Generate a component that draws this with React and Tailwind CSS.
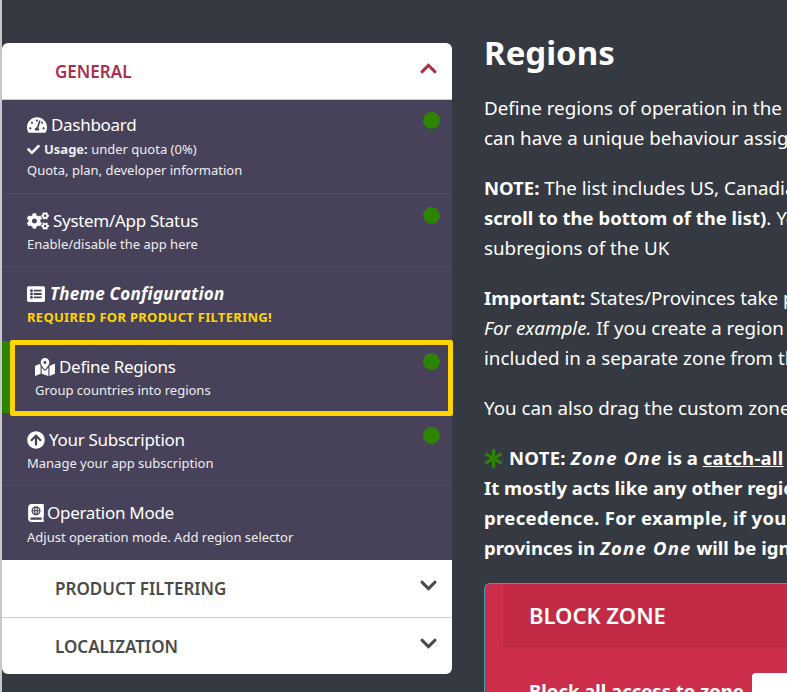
import React from 'react';
import { FaTachometerAlt, FaCheck, FaCogs, FaListAlt, FaMapMarkedAlt, FaArrowCircleUp, FaAtlas, FaChevronUp, FaChevronDown, FaAsterisk } from 'react-icons/fa';

const Dot = ({ className = '' }) => <span className={`w-[17px] h-[17px] rounded-full bg-[#2c8400] shrink-0 ${className}`} />;

function MenuRow({ icon, title, dot, children, className = '' }) {
  return (
    <div className={`flex justify-between pl-[25px] pr-[12px] border-b border-[#514c64] ${className}`}>
      <div>
        <div className="flex items-center gap-[4px] text-[17px] leading-[24px] text-white tracking-[-0.3px]">
          {icon}
          <span>{title}</span>
        </div>
        {children}
      </div>
      {dot}
    </div>
  );
}

function SectionHeader({ title, open, last }) {
  return (
    <div className={`flex justify-between pl-[53px] pr-[14px] pt-[17px] bg-white ${last ? 'h-[56px] rounded-b-[6px]' : 'border-b border-[#cccccc]'} ${!last && !open ? 'h-[58px]' : ''} ${open ? 'h-[57px] rounded-t-[6px] text-[#ab2f4c]' : 'text-[#4a4a4a]'}`}>
      <span className="text-[17px] leading-[24px] font-semibold">{title}</span>
      {open ? <FaChevronUp size={19} className="mt-[-1px]" /> : <FaChevronDown size={19} className="mt-[-1px]" />}
    </div>
  );
}

export default function App() {
  return (
    <div className="flex w-full h-[692px] overflow-hidden bg-[#353a42]" style={{ fontFamily: '"Noto Sans", sans-serif' }}>
      <div className="w-[2px] shrink-0 bg-[#c8c8c8]" />

      {/* Sidebar */}
      <div className="w-[450px] shrink-0 mt-[43px] h-[631px]">
        <SectionHeader title="GENERAL" open />
        <div className="bg-[#47425a] text-[13px] leading-[22px] text-[#eeeeee]">
          <MenuRow icon={<FaTachometerAlt size={20} />} title="Dashboard" dot={<Dot className="mt-[-1px]" />} className="h-[94px] pt-[13px]">
            <div className="flex items-center gap-[4px] mt-[1px]">
              <FaCheck size={13} />
              <span><b>Usage:</b> under quota (0%)</span>
            </div>
            <div className="mt-[-1px]">Quota, plan, developer information</div>
          </MenuRow>
          <MenuRow icon={<FaCogs size={22} />} title="System/App Status" dot={<Dot className="mt-[-2px]" />} className="h-[73px] pt-[15px]">
            <div>Enable/disable the app here</div>
          </MenuRow>
          <div className="h-[73px] pt-[15px] pl-[25px]">
            <div className="flex items-center gap-[5px] text-[17px] leading-[24px] text-white font-bold italic tracking-[0.25px]">
              <FaListAlt size={18} />
              <span>Theme Configuration</span>
            </div>
            <div className="text-[#ffd500] font-bold tracking-[0.3px]">REQUIRED FOR PRODUCT FILTERING!</div>
          </div>
          <div className="w-[451px] h-[76px] flex">
            <div className="w-[8px] h-[72px] bg-[#2c8400] mt-[1px]" />
            <div className="flex-1 flex justify-between border-[5px] border-[#ffd500] rounded-[2px] pl-[20px] pr-[8px] pt-[10px]">
              <div>
                <div className="flex items-center gap-[4px] text-[17px] leading-[24px] text-white tracking-[-0.3px]">
                  <FaMapMarkedAlt size={20} />
                  <span>Define Regions</span>
                </div>
                <div>Group countries into regions</div>
              </div>
              <Dot className="mt-[-2px]" />
            </div>
          </div>
          <MenuRow icon={<FaArrowCircleUp size={18} />} title="Your Subscription" dot={<Dot className="mt-[-1px]" />} className="h-[70px] pt-[12px]">
            <div>Manage your app subscription</div>
          </MenuRow>
          <div className="h-[74px] pt-[15px] pl-[25px]">
            <div className="flex items-center gap-[4px] text-[17px] leading-[24px] text-white tracking-[-0.3px]">
              <FaAtlas size={18} className="mr-[-2px]" />
              <span>Operation Mode</span>
            </div>
            <div className="mt-[1px]">Adjust operation mode. Add region selector</div>
          </div>
        </div>
        <SectionHeader title="PRODUCT FILTERING" />
        <SectionHeader title="LOCALIZATION" last />
      </div>

      {/* Main content */}
      <div className="flex-1 min-w-0 ml-[32px] pt-[29px] text-white text-[18.8px] leading-[30px] whitespace-nowrap">
        <h1 className="text-[33px] leading-[48px] font-bold mb-[16px]">Regions</h1>
        <p className="mb-[20px]">Define regions of operation in the app. Each region<br />can have a unique behaviour assigned to it.</p>
        <p className="mb-[20px]"><b className="text-[18.5px]">NOTE:</b> The list includes US, Canadian states and<br /><b className="text-[18.5px]">scroll to the bottom of the list)</b>. You can also add<br />subregions of the UK</p>
        <p className="mb-[20px]"><b className="text-[18.5px]">Important:</b> States/Provinces take precedence over<br /><i>For example.</i> If you create a region with Canada<br />included in a separate zone from the rest of it</p>
        <p className="mb-[20px]">You can also drag the custom zones to reorder</p>
        <p className="font-bold mb-[20px] text-[18.5px]">
          <span className="inline-flex items-center align-[-3px] mr-[6px]"><FaAsterisk size={19} className="text-[#2c8400]" /></span>
          <span className="tracking-[0.3px]">NOTE:</span> <i className="tracking-[1.2px]">Zone One</i> is a <u className="tracking-[0.3px]">catch-all</u> zone<br />
          It mostly acts like any other region, but takes<br />
          <span className="tracking-[0.35px]">precedence. For example, if you add countries</span><br />
          provinces in <i className="tracking-[1.2px]">Zone One</i> will be ignored
        </p>
        <div className="h-[140px] w-[400px] rounded-tl-[6px] border-t border-l border-[#3fa0b0] bg-[#cc2d4a] pl-[18px]">
          <div className="h-[63px] bg-[#c32a45] border-b border-[#b02640] pl-[26px] text-[22px] leading-[62px] font-semibold">BLOCK ZONE</div>
          <div className="flex pl-[26px] pt-[29px] font-bold text-[18.5px]">
            <span>Block all access to zone</span>
            <span className="w-[100px] h-[40px] ml-[8px] mt-[-3px] bg-white rounded-[4px]" />
          </div>
        </div>
      </div>
    </div>
  );
}
